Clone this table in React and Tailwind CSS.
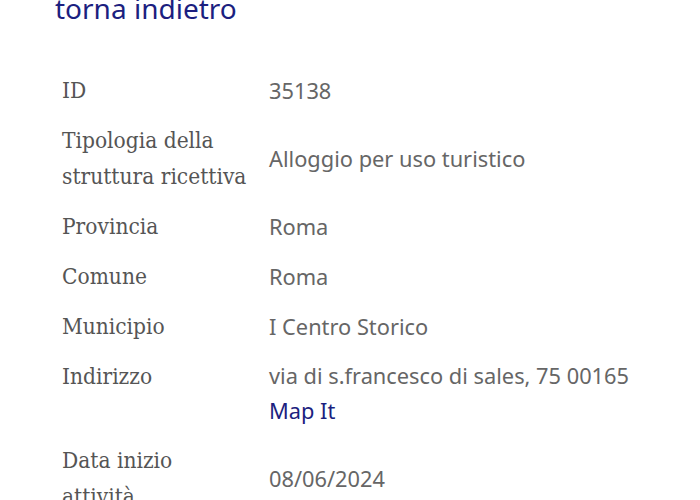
import React from 'react';

const rows = [
    { label: ['ID'], value: '35138' },
    { label: ['Tipologia della', 'struttura ricettiva'], value: 'Alloggio per uso turistico' },
    { label: ['Provincia'], value: 'Roma' },
    { label: ['Comune'], value: 'Roma' },
    { label: ['Municipio'], value: 'I Centro Storico' },
    { label: ['Indirizzo'], value: 'via di s.francesco di sales, 75 00165', map: true },
    { label: ['Data inizio', 'attività'], value: '08/06/2024' },
];

const App = () => {
    return (
        <div className="w-[700px] h-[500px] overflow-hidden bg-white">
            {/* back link */}
            <div className="pl-[55px] mt-[-10px] h-[36px] leading-[36px] text-[28px] text-[#1c1f80] font-['Noto_Sans','Open_Sans',sans-serif]">
                torna indietro
            </div>

            <div className="mt-[39px] pl-[62px]">
                {rows.map((row, i) => (
                    <div key={i} className={`flex py-[7px] ${row.map ? 'items-start' : 'items-center'}`}>
                        <div className="w-[207px] shrink-0 text-[22.5px] leading-[36px] text-[#555555] font-['DejaVu_Serif_Condensed','DejaVu_Serif',serif]">
                            {row.label.map((l, j) => (
                                <div key={j}>{l}</div>
                            ))}
                        </div>
                        <div className="text-[21.8px] leading-[35px] text-[#666666] font-['Noto_Sans','Open_Sans',sans-serif]">
                            <div>{row.value}</div>
                            {row.map && <a className="text-[#1c1f80]">Map It</a>}
                        </div>
                    </div>
                ))}
            </div>
        </div>
    );
};

export default App;
